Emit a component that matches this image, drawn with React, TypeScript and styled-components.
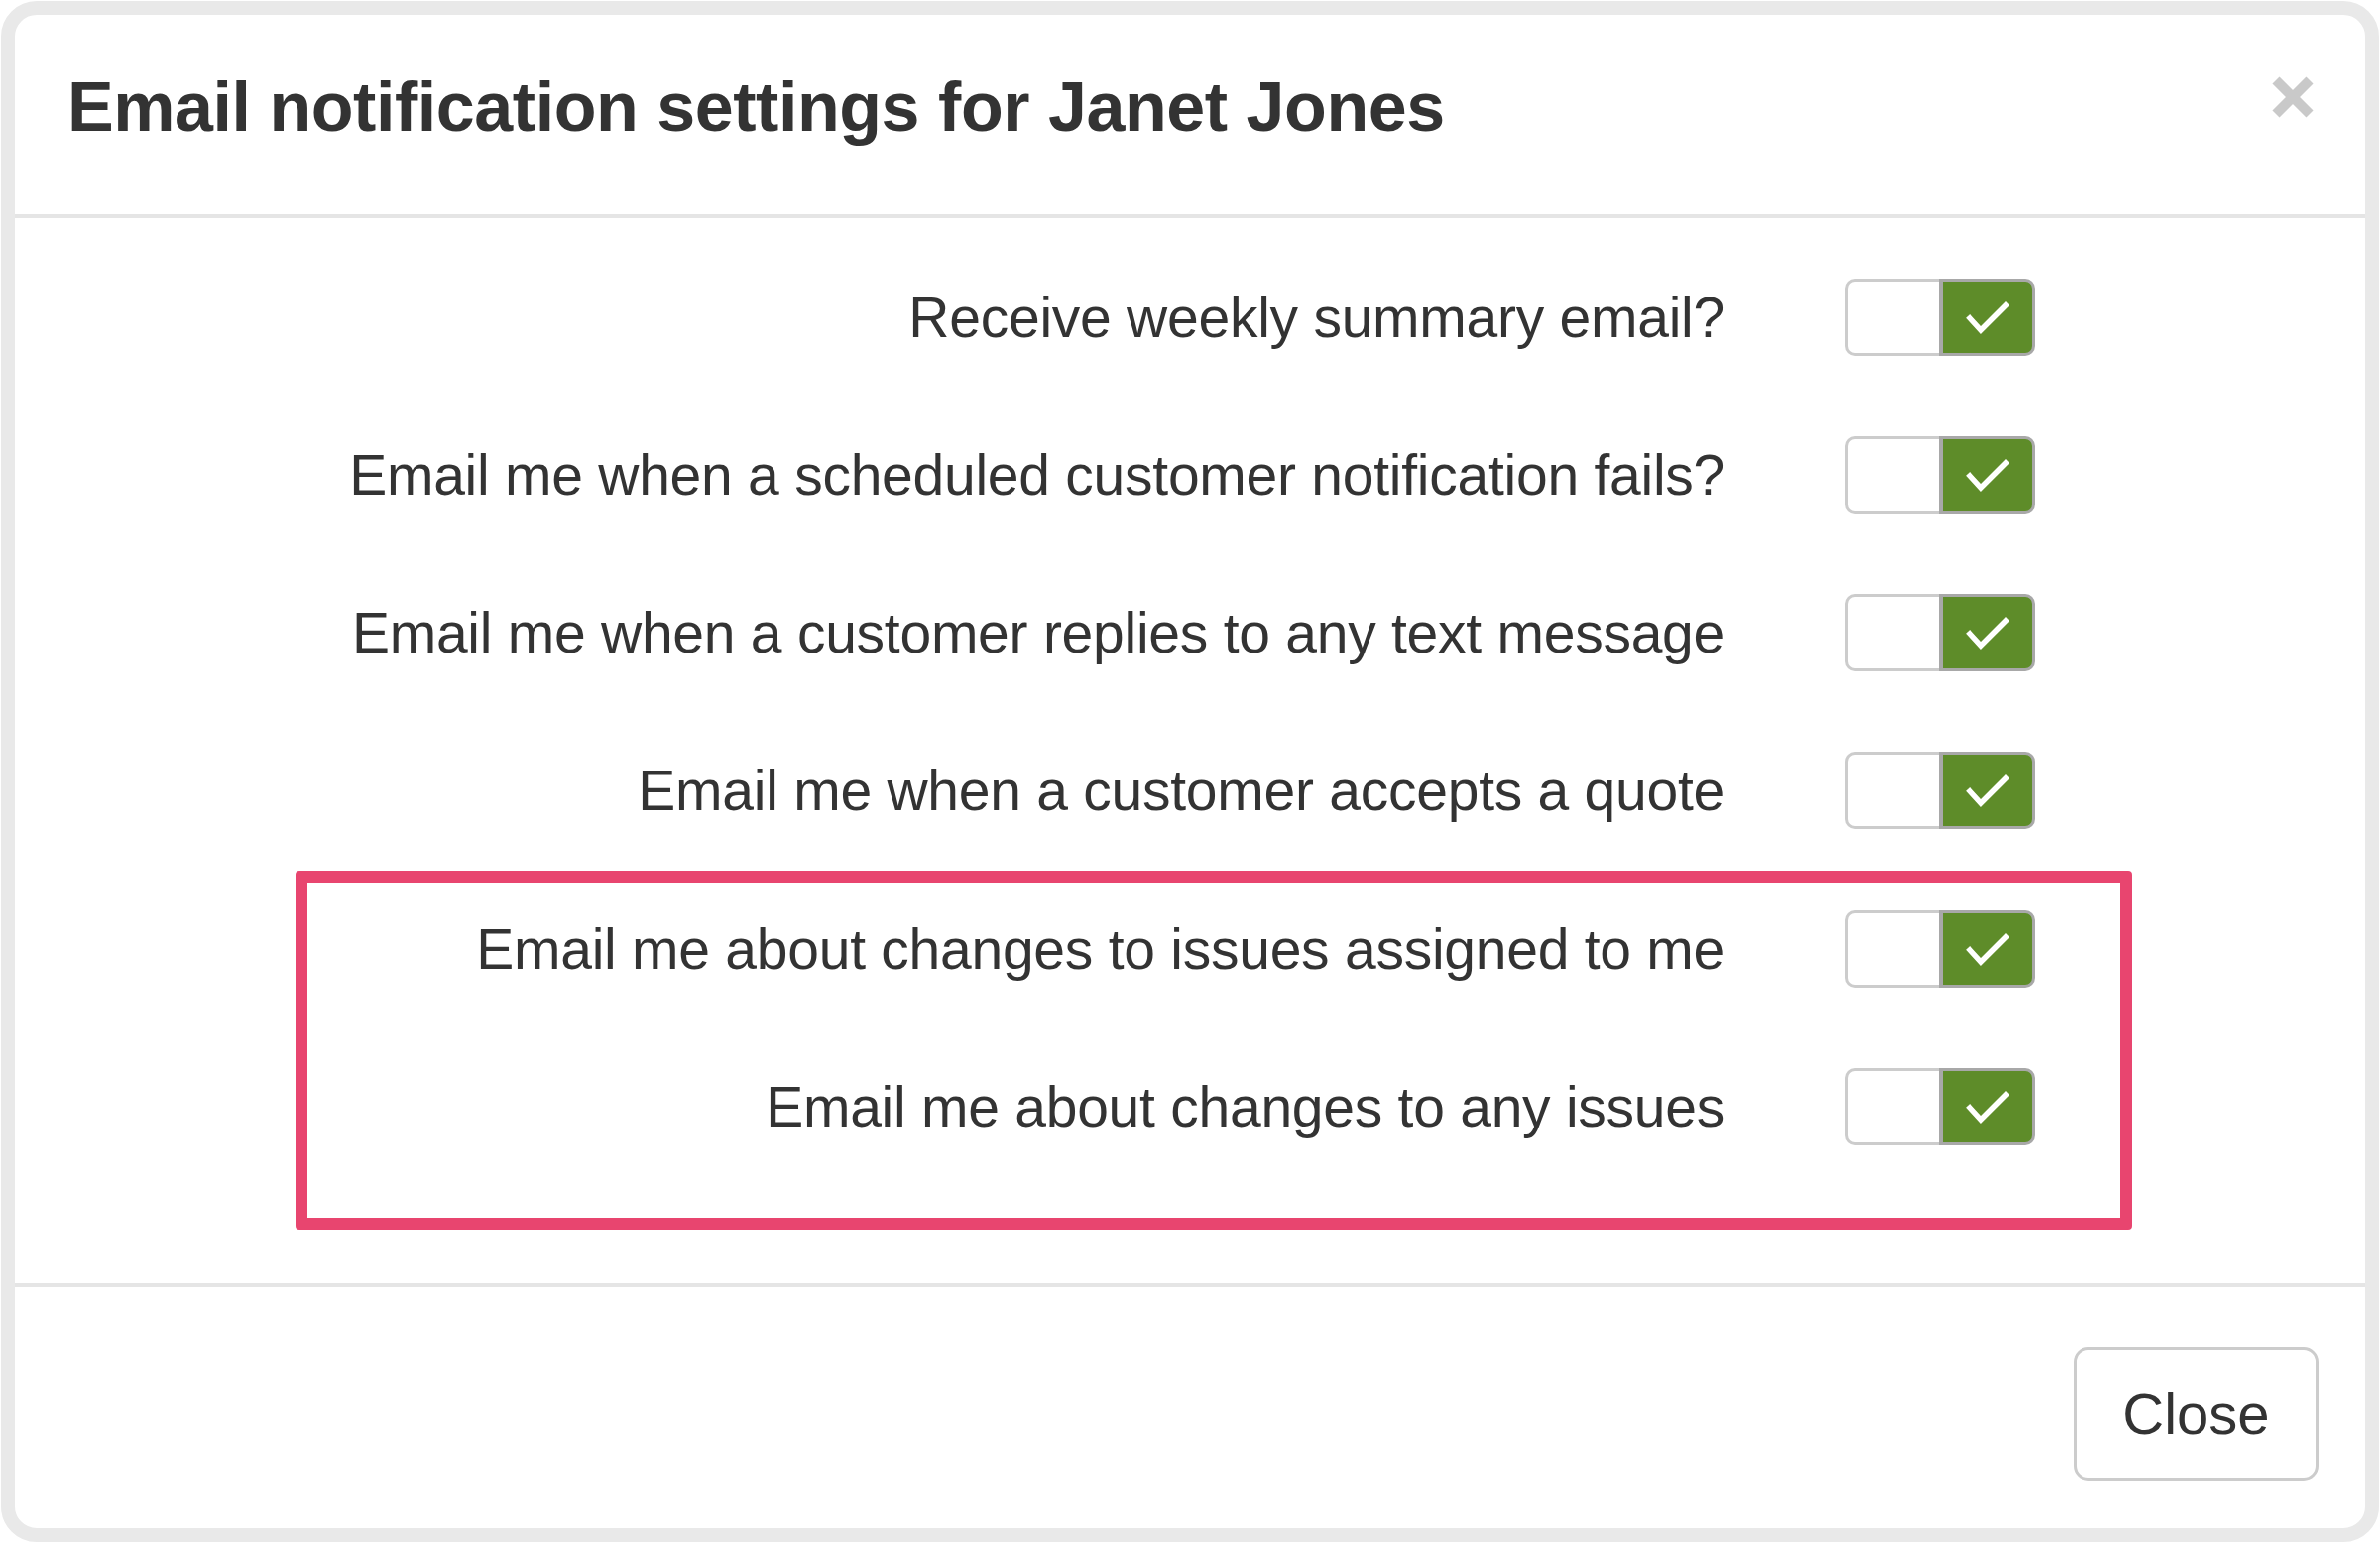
import React from "react";
import styled, { createGlobalStyle } from "styled-components";

const GlobalStyle = createGlobalStyle`
  html, body {
    margin: 0;
    padding: 0;
    background: #ffffff;
  }
  body {
    font-family: "Liberation Sans", Arial, Helvetica, sans-serif;
    color: #333333;
  }
  * {
    box-sizing: border-box;
  }
`;

const settings = [
  { label: "Receive weekly summary email?", on: true },
  { label: "Email me when a scheduled customer notification fails?", on: true },
  { label: "Email me when a customer replies to any text message", on: true },
  { label: "Email me when a customer accepts a quote", on: true },
];

const highlighted = [
  { label: "Email me about changes to issues assigned to me", on: true },
  { label: "Email me about changes to any issues", on: true },
];

const CheckIcon = () => (
  <svg width="44" height="33" viewBox="0 0 44 33">
    <polyline
      points="5,17 16,29 41,4"
      fill="none"
      stroke="#ffffff"
      strokeWidth="5.5"
      strokeLinecap="square"
      strokeLinejoin="miter"
    />
  </svg>
);

const CloseIcon = () => (
  <svg width="42" height="42" viewBox="0 0 42 42">
    <line x1="4" y1="4" x2="38" y2="38" stroke="#c9c9c9" strokeWidth="10" />
    <line x1="38" y1="4" x2="4" y2="38" stroke="#c9c9c9" strokeWidth="10" />
  </svg>
);

const Toggle: React.FC<{ on: boolean }> = ({ on }) => (
  <StyledSwitch>
    <OffHalf />
    <OnHalf active={on}>{on && <CheckIcon />}</OnHalf>
  </StyledSwitch>
);

const SettingRow: React.FC<{ label: string; on: boolean }> = ({ label, on }) => (
  <Row>
    <Label>{label}</Label>
    <Toggle on={on} />
  </Row>
);

export default function App() {
  return (
    <>
      <GlobalStyle />
      <Frame>
        <Modal>
          <Header>
            <Title>Email notification settings for Janet Jones</Title>
            <CloseX type="button" aria-label="Close">
              <CloseIcon />
            </CloseX>
          </Header>
          <Body>
            {settings.map((s) => (
              <SettingRow key={s.label} label={s.label} on={s.on} />
            ))}
            <Highlight>
              {highlighted.map((s) => (
                <SettingRow key={s.label} label={s.label} on={s.on} />
              ))}
            </Highlight>
          </Body>
          <Footer>
            <Button type="button">Close</Button>
          </Footer>
        </Modal>
      </Frame>
    </>
  );
}

const Frame = styled.div`
  margin: 1px;
  width: 2398px;
  height: 1554px;
  border: 14px solid #e9e9e9;
  border-radius: 36px;
  background: #ffffff;
  overflow: hidden;
`;

const Modal = styled.div`
  display: flex;
  flex-direction: column;
  height: 100%;
`;

const Header = styled.div`
  display: flex;
  justify-content: space-between;
  align-items: flex-start;
  height: 205px;
  padding: 56px 52px 0 53px;
  border-bottom: 4px solid #e5e5e5;
`;

const Title = styled.h4`
  margin: 0;
  font-size: 70px;
  line-height: 74px;
  letter-spacing: -0.45px;
  font-weight: 700;
  color: #333333;
`;

const CloseX = styled.button`
  display: flex;
  margin: 6px 0 0 0;
  padding: 0;
  border: 0;
  background: transparent;
  cursor: pointer;
`;

const Body = styled.div`
  display: flex;
  flex-direction: column;
  gap: 81px;
  padding: 61px 333px 54px 60px;
`;

const Highlight = styled.div`
  display: flex;
  flex-direction: column;
  gap: 81px;
  margin: -39px -98px 0 223px;
  padding: 28px 86px 73px 0;
  border: 12px solid #e8456f;
  border-radius: 4px;
`;

const Row = styled.div`
  display: grid;
  grid-template-columns: 1fr 191px;
  column-gap: 122px;
  align-items: center;
  height: 78px;
`;

const Label = styled.div`
  text-align: right;
  font-size: 57px;
  line-height: 78px;
  letter-spacing: -0.25px;
  color: #333333;
  white-space: nowrap;
`;

const StyledSwitch = styled.div`
  display: flex;
  width: 191px;
  height: 78px;
`;

const OffHalf = styled.div`
  width: 94px;
  height: 100%;
  background: #ffffff;
  border: 3px solid #cccccc;
  border-right: 0;
  border-radius: 10px 0 0 10px;
`;

const OnHalf = styled.div<{ active: boolean }>`
  flex: 1;
  display: flex;
  align-items: center;
  justify-content: center;
  height: 100%;
  background: ${(p) => (p.active ? "#5e8c29" : "#ffffff")};
  border: 3px solid #a8a8a8;
  border-left-width: 4px;
  border-radius: 0 10px 10px 0;
`;

const Footer = styled.div`
  display: flex;
  justify-content: flex-end;
  padding: 60px 47px 0 0;
  border-top: 4px solid #e5e5e5;
`;

const Button = styled.button`
  width: 247px;
  height: 135px;
  padding: 0;
  background: #ffffff;
  border: 3px solid #cccccc;
  border-radius: 15px;
  font-family: "Liberation Sans", Arial, Helvetica, sans-serif;
  font-size: 58px;
  color: #333333;
  cursor: pointer;
`;
